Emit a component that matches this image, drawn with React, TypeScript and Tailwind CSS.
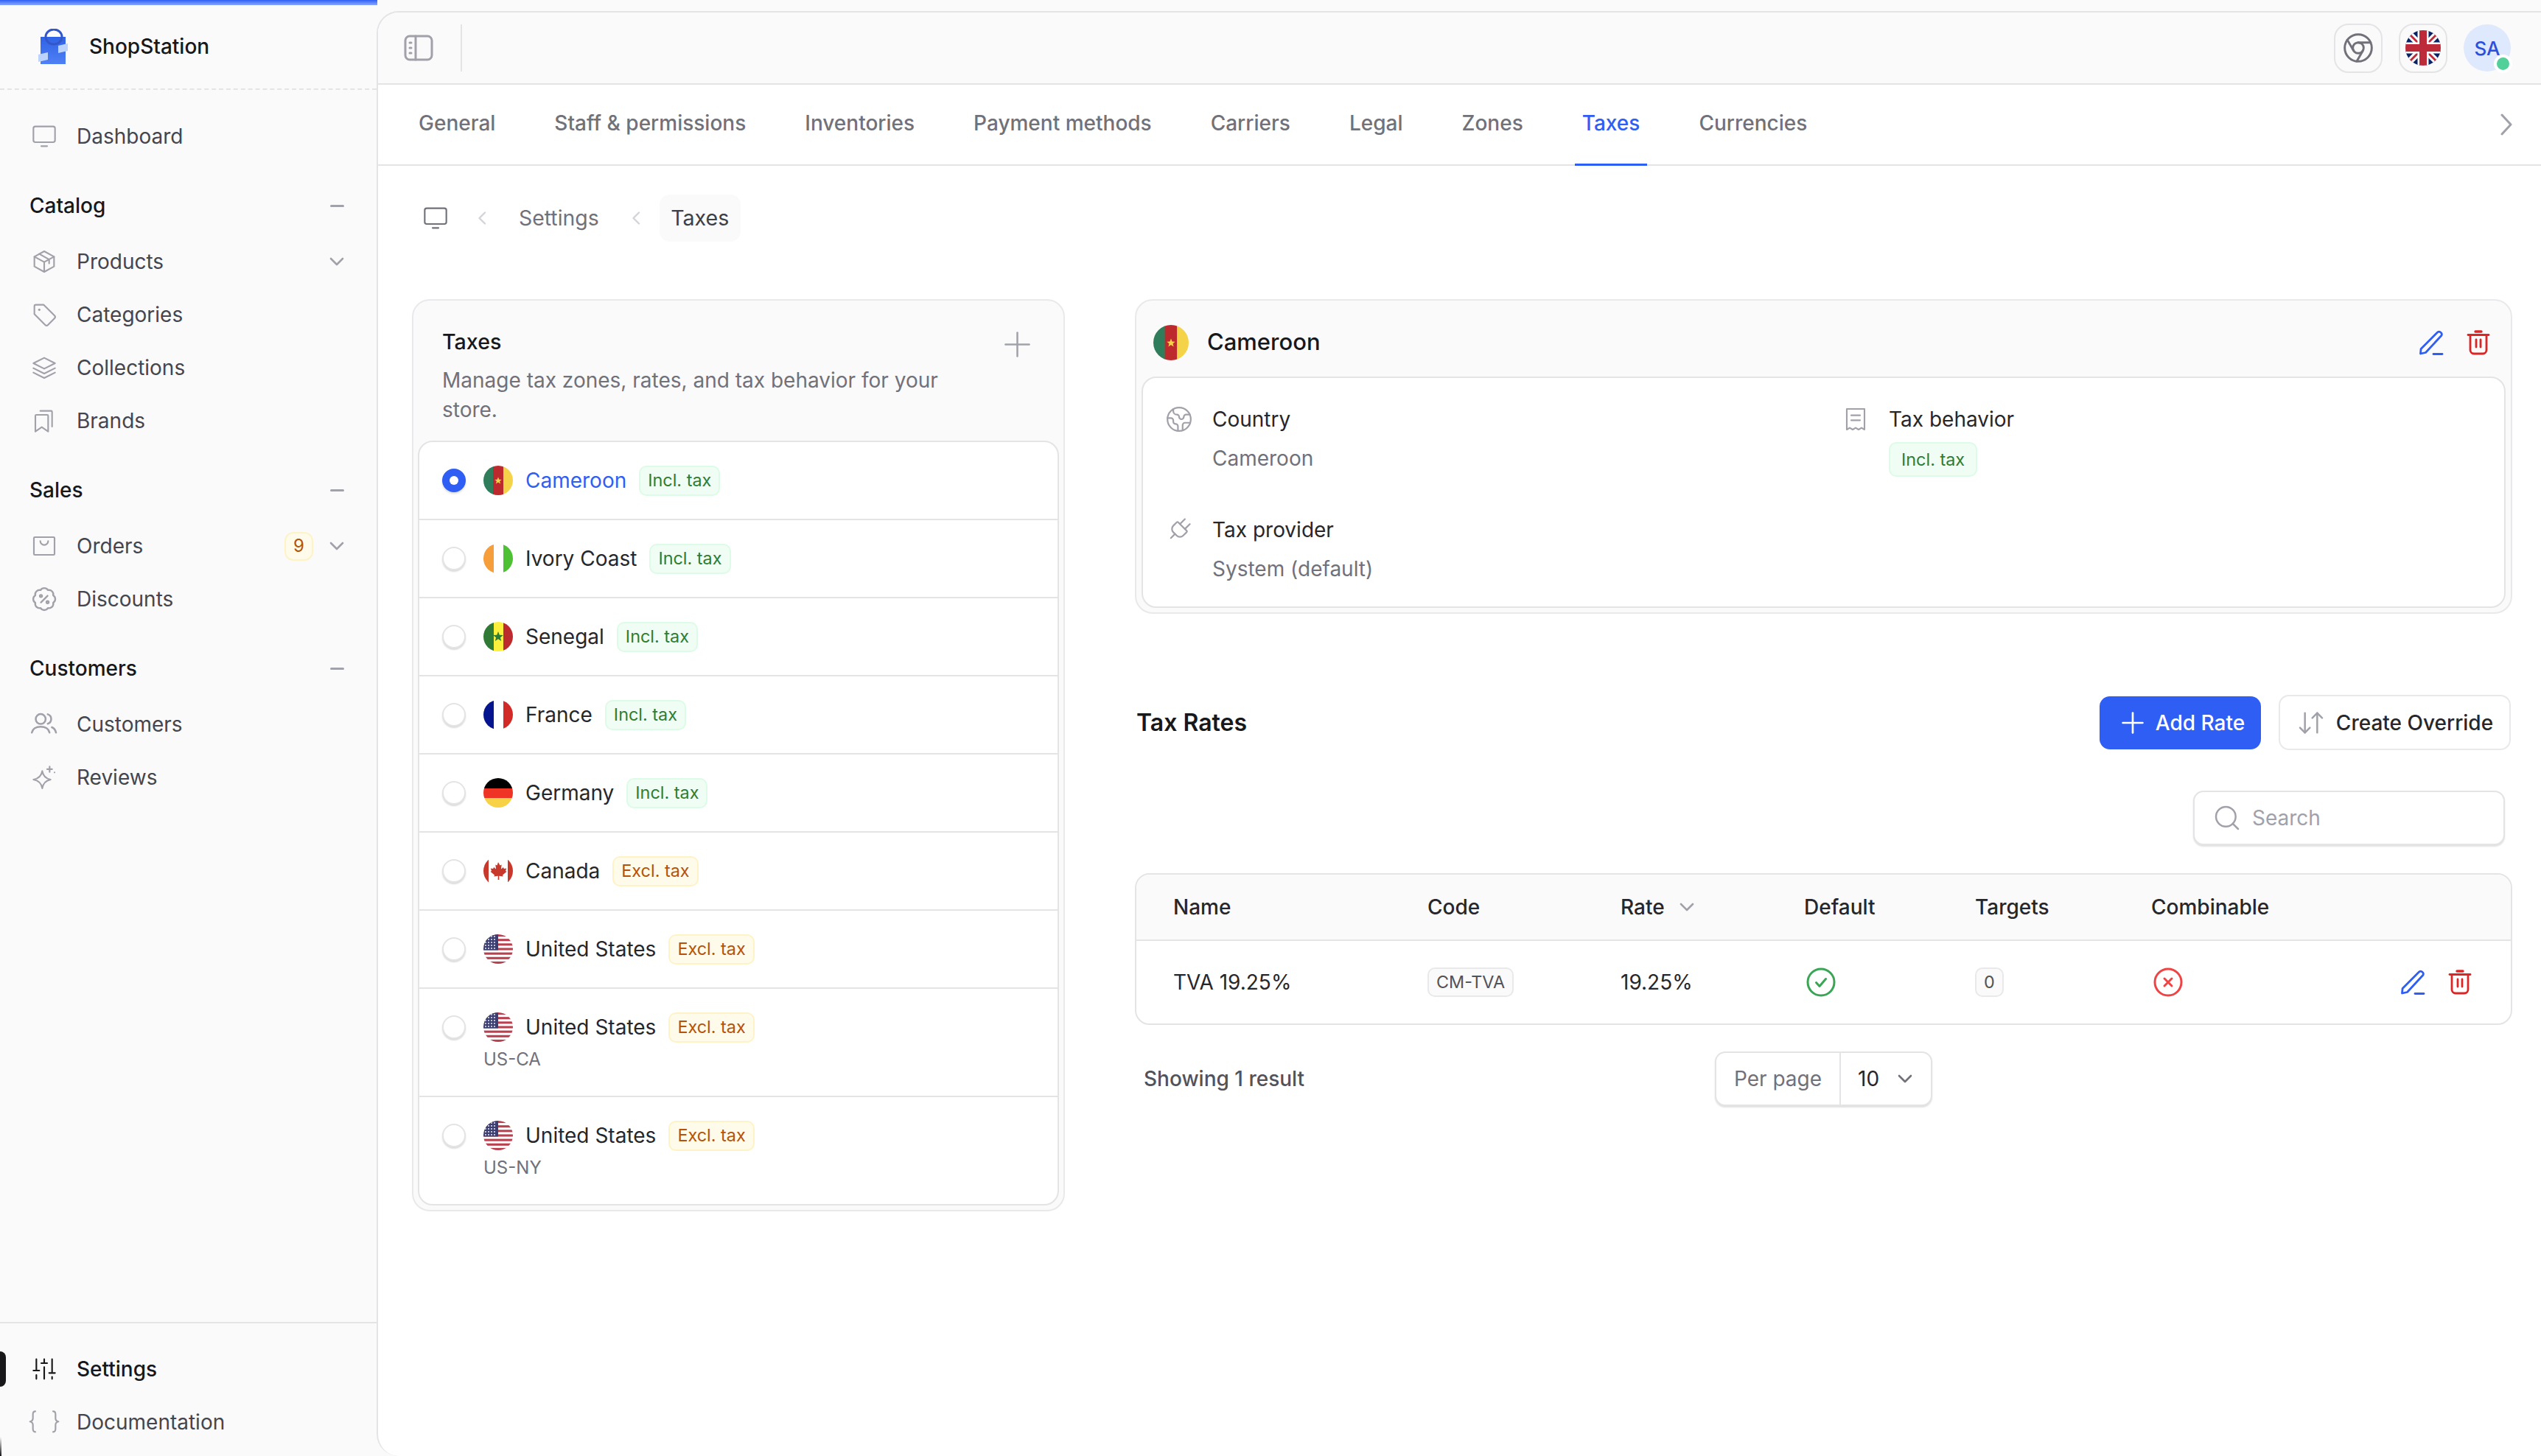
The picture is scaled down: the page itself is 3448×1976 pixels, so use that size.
import { ArrowDownUp, Earth, Plug, Plus, Search } from 'lucide-react';
import type { ReactNode } from 'react';

function Ico({ children, className = 'text-[#a1a1aa]' }: { children: ReactNode; className?: string }) {
	return (
		<svg
			viewBox="0 0 24 24"
			fill="none"
			stroke="currentColor"
			strokeWidth="1.6"
			strokeLinecap="round"
			strokeLinejoin="round"
			className={`h-8 w-8 shrink-0 overflow-visible ${className}`}
		>
			{children}
		</svg>
	);
}

const MonitorPaths = (
	<>
		<rect x="1" y="2" width="22" height="16" rx="2" />
		<path d="M9 22h6" />
	</>
);

function ChevronDownSmall({ className = 'text-[#a1a1aa]' }: { className?: string }) {
	return (
		<svg viewBox="0 0 20 12" fill="none" stroke="currentColor" strokeWidth="2.6" strokeLinecap="round" strokeLinejoin="round" className={`h-[12px] w-[20px] shrink-0 ${className}`}>
			<path d="M2 2l8 8 8-8" />
		</svg>
	);
}

function ChevronLeftSmall() {
	return (
		<svg viewBox="0 0 12 18" fill="none" stroke="#d4d4d8" strokeWidth="2.4" strokeLinecap="round" strokeLinejoin="round" className="h-[18px] w-[12px] shrink-0">
			<path d="M10 1.5 2.5 9l7.5 7.5" />
		</svg>
	);
}

function EditIcon() {
	return (
		<svg viewBox="0 0 34 34" fill="none" stroke="#2f5ef5" strokeWidth="2.8" strokeLinecap="round" strokeLinejoin="round" className="h-[34px] w-[34px] shrink-0">
			<path d="M25 3.5a3.6 3.6 0 0 1 6 3.8L9.5 30.5 2.5 32l.6-6.6z" />
			<path d="M20 32.5h12" />
		</svg>
	);
}

function TrashIcon() {
	return (
		<svg viewBox="0 0 32 34" fill="none" stroke="#dc2626" strokeWidth="2.8" strokeLinecap="round" strokeLinejoin="round" className="h-[34px] w-[32px] shrink-0">
			<path d="M12 2h8" strokeWidth="3.4" />
			<path d="M2 6.5h28" />
			<path d="M5 7v20a5 5 0 0 0 5 5h12a5 5 0 0 0 5-5V7" />
			<path d="M13 13v10M19 13v10" />
		</svg>
	);
}

function Logo() {
	return (
		<svg viewBox="0 0 40 48" className="h-12 w-10 shrink-0">
			<defs>
				<linearGradient id="bag" x1="0" y1="0" x2="0" y2="1">
					<stop offset="0" stopColor="#2f62e6" />
					<stop offset="1" stopColor="#4f80f5" />
				</linearGradient>
			</defs>
			<rect x="3" y="11" width="34" height="37" fill="url(#bag)" />
			<ellipse cx="21" cy="11" rx="11" ry="10" fill="none" stroke="#3556c8" strokeWidth="3" />
			<path d="M0 35l13-3v10l-13 3z" fill="#bcd4fb" />
			<path d="M27 23l13-3v10l-13 3z" fill="#bcd4fb" />
		</svg>
	);
}

function FlagBox({ size, children }: { size: 'sm' | 'lg'; children: ReactNode }) {
	return (
		<svg viewBox="0 0 40 40" className={`shrink-0 rounded-full ${size === 'sm' ? 'h-10 w-10' : 'h-12 w-12'}`}>
			{children}
		</svg>
	);
}

function Flag({ code, size = 'sm' }: { code: string; size?: 'sm' | 'lg' }) {
	if (code === 'cm')
		return (
			<FlagBox size={size}>
				<rect width="13.3" height="40" fill="#2f7d5b" />
				<rect x="13" width="14" height="40" fill="#bd2a2e" />
				<rect x="27" width="13" height="40" fill="#f5d348" />
				<path d="M20 15.5l1.3 3.2 3.4.2-2.6 2.2.9 3.4-3-1.9-3 1.9.9-3.4-2.6-2.2 3.4-.2z" fill="#f5d348" />
			</FlagBox>
		);
	if (code === 'ci')
		return (
			<FlagBox size={size}>
				<rect width="14" height="40" fill="#f59e3a" />
				<rect x="14" width="13" height="40" fill="#fff" />
				<rect x="27" width="13" height="40" fill="#4ec033" />
			</FlagBox>
		);
	if (code === 'sn')
		return (
			<FlagBox size={size}>
				<rect width="14" height="40" fill="#2f7a35" />
				<rect x="14" width="13" height="40" fill="#fdf03d" />
				<rect x="27" width="13" height="40" fill="#bd2a2e" />
				<path d="M20 13l1.8 4.7 5 .3-3.9 3.2 1.3 4.8-4.2-2.7-4.2 2.7 1.3-4.8-3.9-3.2 5-.3z" fill="#2f7a35" />
			</FlagBox>
		);
	if (code === 'fr')
		return (
			<FlagBox size={size}>
				<rect width="14" height="40" fill="#05148f" />
				<rect x="14" width="13" height="40" fill="#fff" />
				<rect x="27" width="13" height="40" fill="#d22a26" />
			</FlagBox>
		);
	if (code === 'de')
		return (
			<FlagBox size={size}>
				<rect width="40" height="14" fill="#000" />
				<rect y="14" width="40" height="13" fill="#ef3324" />
				<rect y="27" width="40" height="13" fill="#f7d146" />
			</FlagBox>
		);
	if (code === 'ca')
		return (
			<FlagBox size={size}>
				<rect width="40" height="40" fill="#fff" />
				<rect width="7" height="32" y="4" fill="#c8382b" />
				<rect x="33" width="7" height="32" y="4" fill="#c8382b" />
				<path d="M20 8l2.5 4.5 2.2-1-.8 6 3-2.6 1 2 3.3-.5-1.2 3.6 1.5.9-5.5 4.6.6 2-5.4-.7.2 5.2h-1.8l.2-5.2-5.4.7.6-2-5.5-4.6 1.5-.9-1.2-3.6 3.3.5 1-2 3 2.6-.8-6 2.2 1z" fill="#c8382b" />
			</FlagBox>
		);
	return (
		<FlagBox size={size}>
			<rect width="40" height="40" fill="#fff" />
			{[0, 1, 2, 3, 4, 5, 6].map((i) => (
				<rect key={i} y={i * 6.15} width="40" height="3.08" fill="#b9404f" />
			))}
			<rect width="20" height="21.5" fill="#3b3f72" />
			{[3, 7, 11, 15, 19].map((y) =>
				[3, 7, 11, 15].map((x) => <circle key={`${x}-${y}`} cx={x} cy={y} r="0.9" fill="#fff" />),
			)}
		</FlagBox>
	);
}

function UkFlag() {
	return (
		<svg viewBox="0 0 48 48" className="h-12 w-12 rounded-full">
			<rect width="48" height="48" fill="#0a2366" />
			<path d="M0 0l48 48M48 0L0 48" stroke="#fff" strokeWidth="9" />
			<path d="M0 0l48 48M48 0L0 48" stroke="#bd2a3a" strokeWidth="3" />
			<path d="M24 0v48M0 24h48" stroke="#fff" strokeWidth="15" />
			<path d="M24 0v48M0 24h48" stroke="#bd2a3a" strokeWidth="10" />
		</svg>
	);
}

function NavItem({ icon, label, active, badge, chevron }: { icon: ReactNode; label: string; active?: boolean; badge?: string; chevron?: boolean }) {
	return (
		<div className="relative flex h-[72px] items-center gap-[28px] pr-[44px] pl-[44px]">
			{active && <span className="absolute top-[12px] left-0 h-[48px] w-[8px] rounded-r-full bg-[#18181b]" />}
			<Ico className={active ? 'text-[#18181b]' : 'text-[#a1a1aa]'}>{icon}</Ico>
			<span className={`flex-1 text-[28px] ${active ? 'font-medium text-[#18181b]' : 'text-[#45454e]'}`}>{label}</span>
			{badge && (
				<span className="-mr-[6px] flex h-[39px] w-[39px] items-center justify-center rounded-[12px] border-2 border-[#fef3c7] bg-[#fffbeb] text-[24px] text-[#b45309]">
					{badge}
				</span>
			)}
			{chevron && <ChevronDownSmall />}
		</div>
	);
}

function SectionTitle({ label }: { label: string }) {
	return (
		<div className="mt-[36px] mb-[18px] flex h-[44px] items-center justify-between pr-[44px] pl-[40px]">
			<span className="text-[28px] font-medium text-[#18181b]">{label}</span>
			<span className="h-[3px] w-[19px] rounded-full bg-[#a1a1aa]" />
		</div>
	);
}

function Sidebar() {
	return (
		<aside className="relative flex h-full w-[511px] shrink-0 flex-col bg-[#fafafb]">
			<div className="absolute top-0 left-0 h-[7px] w-[512px] bg-gradient-to-b from-[#2f5ef5] to-[#8aa6fa]" />
			<div className="absolute bottom-0 left-0 h-[26px] w-[2px] bg-gradient-to-b from-transparent to-[#18181b]" />
			<div className="flex h-[122px] shrink-0 items-center gap-[29px] border-b-2 border-dashed border-[#e4e4e7] pt-[6px] pl-[52px]">
				<Logo />
				<span className="text-[28px] font-medium text-[#18181b]">ShopStation</span>
			</div>
			<div className="flex-1 pt-[27px]">
				<NavItem label="Dashboard" icon={MonitorPaths} />
				<SectionTitle label="Catalog" />
				<NavItem
					label="Products"
					chevron
					icon={
						<>
							<path d="M12 1.5 22 7v10l-10 5.5L2 17V7z" />
							<path d="M2 7l10 5.5L22 7M12 12.5v10M7 4.2l10 5.6v4" />
						</>
					}
				/>
				<NavItem
					label="Categories"
					icon={
						<>
							<path d="M2 3.5A1.5 1.5 0 0 1 3.5 2h8L22.5 13a2 2 0 0 1 0 2.8l-6.7 6.7a2 2 0 0 1-2.8 0L2 11.5z" />
							<path d="M7 7h.01" strokeWidth="2.4" />
						</>
					}
				/>
				<NavItem
					label="Collections"
					icon={
						<>
							<path d="M12 2 23 7.5 12 13 1 7.5z" />
							<path d="M1 12.5 12 18l11-5.5M1 17l11 5.5L23 17" />
						</>
					}
				/>
				<NavItem
					label="Brands"
					icon={
						<>
							<path d="M3 7a1 1 0 0 1 1-1h11a1 1 0 0 1 1 1v16l-6.5-4.5L3 23z" />
							<path d="M8 2h11a1 1 0 0 1 1 1v15" />
						</>
					}
				/>
				<SectionTitle label="Sales" />
				<NavItem
					label="Orders"
					badge="9"
					chevron
					icon={
						<>
							<rect x="1.5" y="3" width="21" height="18" rx="1" />
							<path d="M8 7a4 4 0 0 0 8 0" />
						</>
					}
				/>
				<NavItem
					label="Discounts"
					icon={
						<g transform="translate(-1.4 -1.4) scale(1.12)">
							<path d="M3.85 8.62a4 4 0 0 1 4.78-4.77 4 4 0 0 1 6.74 0 4 4 0 0 1 4.78 4.78 4 4 0 0 1 0 6.74 4 4 0 0 1-4.77 4.78 4 4 0 0 1-6.75 0 4 4 0 0 1-4.78-4.77 4 4 0 0 1 0-6.76Z" />
							<path d="m15 9-6 6" />
							<circle cx="9" cy="9.2" r="1" />
							<circle cx="15" cy="14.8" r="1" />
						</g>
					}
				/>
				<SectionTitle label="Customers" />
				<NavItem
					label="Customers"
					icon={
						<g transform="translate(-2.4 -2.4) scale(1.2)">
							<circle cx="9" cy="7.5" r="4.2" />
							<path d="M1.5 19c.6-3 3.5-5 7.5-5s6.9 2 7.5 5" />
							<path d="M15 3.5a4.2 4.2 0 0 1 0 8" />
							<path d="M18.5 14.5c1.7.7 3 2.300 3.500 4.500" />
						</g>
					}
				/>
				<NavItem
					label="Reviews"
					icon={
						<>
							<path d="M10 5.5c.8 5 3.4 7.7 8.5 8.7-5 1-7.7 3.700-8.500 9-.8-5.300-3.400-8-9-9 5.600-1 8.200-3.700 9-8.700z" />
							<path d="M17.5 1v5.500M15 3.700h5M22.500 7v.01" />
						</>
					}
				/>
			</div>
			<div className="shrink-0 border-t-2 border-[#e4e4e7] pt-[26px] pb-[10px]">
				<NavItem
					label="Settings"
					active
					icon={
						<>
							<path d="M4 2v11M4 18v4M12 2v3M12 10v12M20 2v13M20 20v2" />
							<path d="M1 13.5h6M9 6h6M17 16h6" />
						</>
					}
				/>
				<NavItem
					label="Documentation"
					icon={
						<>
							<path d="M3 1C1 1 .5 2.5.5 4v4c0 1.500-.8 3-3 3.500C-.3 12 .5 13.500.5 15v4c0 1.500.5 3 2.500 3" />
							<path d="M21 1c2 0 2.500 1.500 2.500 3v4c0 1.500.8 3 3 3.500-2.200.5-3 2-3 3.500v4c0 1.500-.5 3-2.500 3" />
						</>
					}
				/>
			</div>
		</aside>
	);
}

function Header() {
	return (
		<header className="flex h-[98px] shrink-0 items-center justify-between border-b-2 border-[#e4e4e7] bg-[#fafafb] pr-[41px] pl-[35px]">
			<div className="flex h-full items-center">
				<svg viewBox="0 0 40 36" fill="none" stroke="#a1a1aa" strokeWidth="3" strokeLinecap="round" className="h-[36px] w-[40px]">
					<rect x="2" y="2" width="36" height="32" rx="6" />
					<path d="M16 2v32M8 11h2M8 18h2M8 25h2" />
				</svg>
				<span className="ml-[37px] h-[64px] w-[2px] bg-[#e4e4e7]" />
			</div>
			<div className="flex items-center gap-[22px]">
				<div className="flex h-[67px] w-[66px] items-center justify-center rounded-[20px] border-2 border-[#e4e4e7]">
					<svg viewBox="0 0 24 24" fill="none" stroke="#71717a" strokeWidth="1.6" strokeLinecap="round" className="h-[44px] w-[44px]">
						<circle cx="12" cy="12" r="10" />
						<circle cx="12" cy="12" r="4" />
						<path d="M10.88 21.94 15.46 14M21.17 8H12M3.95 6.06 8.54 14" />
					</svg>
				</div>
				<div className="flex h-[67px] w-[66px] items-center justify-center rounded-[20px] border-2 border-[#e4e4e7]">
					<UkFlag />
				</div>
				<div className="relative flex h-[64px] w-[64px] items-center justify-center rounded-full bg-[#dfe9fd] text-[26px] font-medium text-[#2f4fd8]">
					SA
					<span className="absolute -right-[2px] -bottom-[2px] h-[25px] w-[25px] rounded-full border-[4px] border-white bg-[#52d09a]" />
				</div>
			</div>
		</header>
	);
}

const tabs = ['General', 'Staff & permissions', 'Inventories', 'Payment methods', 'Carriers', 'Legal', 'Zones', 'Taxes', 'Currencies'];

function Tabs() {
	return (
		<nav className="flex h-[110px] shrink-0 items-stretch justify-between border-b-2 border-[#e4e4e7] pr-[39px] pl-[45px]">
			<div className="flex items-stretch gap-[60px]">
				{tabs.map((t) => (
					<div
						key={t}
						className={`-mb-[2px] flex items-center border-b-[3px] px-[10px] pb-[3px] text-[28px] font-medium ${t === 'Taxes' ? 'border-[#2f5ef5] text-[#2f5ef5]' : 'border-transparent text-[#71717a]'}`}
					>
						{t}
					</div>
				))}
			</div>
			<div className="flex items-center">
				<svg viewBox="0 0 16 30" fill="none" stroke="#a1a1aa" strokeWidth="3" strokeLinecap="round" strokeLinejoin="round" className="h-[30px] w-[16px]">
					<path d="M2 2l12 13L2 28" />
				</svg>
			</div>
		</nav>
	);
}

function TaxBadge({ kind, tall }: { kind: 'incl' | 'excl'; tall?: boolean }) {
	return (
		<span
			className={`flex items-center rounded-[10px] border-2 text-[23.4px] ${tall ? 'h-[47px] px-[15px]' : 'h-[41px] px-[10px]'} ${kind === 'incl' ? 'border-[#dcfce7] bg-[#f0fdf4] text-[#2e7d32]' : 'border-[#fef3c7] bg-[#fffbeb] text-[#b45309]'}`}
		>
			{kind === 'incl' ? 'Incl. tax' : 'Excl. tax'}
		</span>
	);
}

const zones = [
	{ name: 'Cameroon', flag: 'cm', kind: 'incl' as const, selected: true },
	{ name: 'Ivory Coast', flag: 'ci', kind: 'incl' as const },
	{ name: 'Senegal', flag: 'sn', kind: 'incl' as const },
	{ name: 'France', flag: 'fr', kind: 'incl' as const },
	{ name: 'Germany', flag: 'de', kind: 'incl' as const },
	{ name: 'Canada', flag: 'ca', kind: 'excl' as const },
	{ name: 'United States', flag: 'us', kind: 'excl' as const },
	{ name: 'United States', flag: 'us', kind: 'excl' as const, sub: 'US-CA' },
	{ name: 'United States', flag: 'us', kind: 'excl' as const, sub: 'US-NY' },
];

function Radio({ selected }: { selected?: boolean }) {
	if (selected)
		return (
			<span className="flex h-8 w-8 shrink-0 items-center justify-center rounded-full bg-[#2f5ef5] shadow-[0_2px_3px_rgba(0,0,0,0.15)]">
				<span className="h-[12px] w-[12px] rounded-full bg-white" />
			</span>
		);
	return <span className="h-8 w-8 shrink-0 rounded-full border-2 border-[#e4e4e7] bg-white shadow-[0_2px_2px_rgba(0,0,0,0.14)]" />;
}

function TaxesCard() {
	return (
		<section className="w-[886px] shrink-0 self-start rounded-[24px] border-2 border-[#e9e9ec] bg-[#fafafb] p-[6px]">
			<div className="flex items-start justify-between pt-[30px] pr-[29px] pb-[22px] pl-[33px]">
				<div className="w-[700px]">
					<h2 className="text-[28.6px] leading-[40px] font-medium text-[#18181b]">Taxes</h2>
					<p className="mt-[12px] text-[28px] leading-[40px] text-[#71717a]">Manage tax zones, rates, and tax behavior for your store.</p>
				</div>
				<Plus size={55} strokeWidth={1.1} className="-mt-[4px] text-[#a1a1aa]" />
			</div>
			<ul className="overflow-hidden rounded-[20px] border-2 border-[#e4e4e7] bg-white">
				{zones.map((z, i) => (
					<li key={i} className={`py-[31px] pl-[31px] ${i > 0 ? 'border-t-2 border-[#e4e4e7]' : ''}`}>
						<div className="flex h-[42px] items-center">
							<Radio selected={z.selected} />
							<span className="ml-[24px]">
								<Flag code={z.flag} />
							</span>
							<span className={`ml-[17px] text-[28px] ${z.selected ? 'text-[#2f5ef5]' : 'text-[#27272a]'}`}>{z.name}</span>
							<span className="ml-[17px]">
								<TaxBadge kind={z.kind} />
							</span>
						</div>
						{z.sub && <div className="mt-[5px] pl-[56px] text-[24px] leading-[36px] text-[#71717a]">{z.sub}</div>}
					</li>
				))}
			</ul>
		</section>
	);
}

function DetailItem({ icon, title, children }: { icon: ReactNode; title: string; children: ReactNode }) {
	return (
		<div className="flex items-start gap-[29px]">
			<div className="flex h-8 w-8 items-center justify-center">{icon}</div>
			<div>
				<div className="text-[28px] leading-[32px] text-[#27272a]">{title}</div>
				<div className="mt-[21px] text-[28px] leading-[32px] text-[#71717a]">{children}</div>
			</div>
		</div>
	);
}

function CameroonCard() {
	return (
		<section className="rounded-[24px] border-2 border-[#e9e9ec] bg-[#fafafb] px-[7px] pb-[6px]">
			<div className="flex h-[103px] items-center justify-between pt-[10px] pr-[21px] pl-[16px]">
				<div className="flex items-center gap-[25px]">
					<Flag code="cm" size="lg" />
					<span className="text-[31px] font-medium text-[#18181b]">Cameroon</span>
				</div>
				<div className="flex items-center gap-[31px]">
					<EditIcon />
					<TrashIcon />
				</div>
			</div>
			<div className="grid h-[314px] grid-cols-[918px_1fr] content-start gap-y-[56px] rounded-[20px] border-2 border-[#e4e4e7] bg-white pt-[40px] pl-[33px]">
				<DetailItem icon={<Earth size={38} strokeWidth={1.4} className="shrink-0 text-[#a1a1aa]" />} title="Country">
					Cameroon
				</DetailItem>
				<DetailItem
					icon={
						<Ico>
							<path d="M3 1.5h18v21l-3-1.8-3 1.8-3-1.8-3 1.8-3-1.8-3 1.8z" />
							<path d="M7.5 8h9M7.5 13h9" />
						</Ico>
					}
					title="Tax behavior"
				>
					<div className="-mt-[6px] flex">
						<TaxBadge kind="incl" tall />
					</div>
				</DetailItem>
				<DetailItem icon={<Plug size={38} strokeWidth={1.4} className="shrink-0 rotate-45 text-[#a1a1aa]" />} title="Tax provider">
					System (default)
				</DetailItem>
			</div>
		</section>
	);
}

function SmallCode({ children }: { children: ReactNode }) {
	return <span className="flex h-[40px] items-center rounded-[10px] border-2 border-[#e9e9ec] bg-[#fafafa] px-[10px] text-[23.4px] text-[#52525b]">{children}</span>;
}

function RatesTable() {
	const cols = 'grid grid-cols-[345px_262px_249px_232px_239px_1fr] items-center pl-[50px]';
	return (
		<div className="mt-[38px] overflow-hidden rounded-[20px] border-2 border-[#e4e4e7]">
			<div className={`${cols} h-[90px] border-b-2 border-[#e4e4e7] bg-[#fafafb] text-[28px] font-medium text-[#27272a]`}>
				<span>Name</span>
				<span>Code</span>
				<span className="flex items-center gap-[20px]">
					Rate <ChevronDownSmall className="text-[#a1a1aa]" />
				</span>
				<span>Default</span>
				<span>Targets</span>
				<span>Combinable</span>
			</div>
			<div className={`${cols} h-[112px] text-[28px] text-[#27272a]`}>
				<span>TVA 19.25%</span>
				<span className="flex">
					<SmallCode>CM-TVA</SmallCode>
				</span>
				<span>19.25%</span>
				<span className="pl-[3px]">
					<svg viewBox="0 0 40 40" fill="none" stroke="#3aa655" strokeWidth="3" strokeLinecap="round" strokeLinejoin="round" className="h-10 w-10">
						<circle cx="20" cy="20" r="18" />
						<path d="M13.5 20.5l4.5 5 8.5-10" />
					</svg>
				</span>
				<span className="flex">
					<SmallCode>0</SmallCode>
				</span>
				<span className="flex items-center justify-between pr-[53px] pl-[3px]">
					<svg viewBox="0 0 40 40" fill="none" stroke="#ef4444" strokeWidth="3" strokeLinecap="round" className="h-10 w-10">
						<circle cx="20" cy="20" r="18" />
						<path d="M15 15l10 10M25 15L15 25" />
					</svg>
					<span className="flex items-center gap-[31px]">
						<EditIcon />
						<TrashIcon />
					</span>
				</span>
			</div>
		</div>
	);
}

function RatesSection() {
	return (
		<section>
			<div className="mt-[110px] flex items-center justify-between pl-[2px]">
				<h2 className="text-[32px] font-semibold text-[#18181b]">Tax Rates</h2>
				<div className="flex items-center gap-[24px] pr-[2px]">
					<button className="flex h-[72px] w-[219px] items-center justify-center gap-[8px] rounded-[14px] bg-[#2f5ef5] text-[28px] font-medium text-white">
						<Plus size={46} strokeWidth={1.4} />
						Add Rate
					</button>
					<button className="flex h-[75px] w-[315px] items-center justify-center gap-[14px] rounded-[14px] border-2 border-[#e9e9ec] bg-white text-[28px] font-medium text-[#27272a]">
						<ArrowDownUp size={40} strokeWidth={1.5} className="text-[#a1a1aa]" />
						Create Override
					</button>
				</div>
			</div>
			<div className="mt-[55px] flex justify-end pr-[10px]">
				<div className="flex h-[74px] w-[423px] items-center gap-[14px] rounded-[14px] border-2 border-[#e4e4e7] bg-white pl-[24px] shadow-[0_2px_2px_rgba(0,0,0,0.12)]">
					<Search size={40} strokeWidth={1.5} className="text-[#a1a1aa]" />
					<span className="text-[28px] text-[#a1a1aa]">Search</span>
				</div>
			</div>
			<RatesTable />
			<div className="mt-[36px] flex h-[74px] items-center pl-[12px]">
				<span className="w-[775px] text-[28px] font-medium text-[#52525b]">Showing 1 result</span>
				<div className="flex h-full w-[295px] items-stretch rounded-[14px] border-2 border-[#e4e4e7] bg-white shadow-[0_2px_2px_rgba(0,0,0,0.12)]">
					<span className="flex w-[169px] items-center justify-center border-r-2 border-[#e4e4e7] text-[28px] text-[#71717a]">Per page</span>
					<span className="flex flex-1 items-center gap-[25px] pl-[23px] text-[28px] text-[#27272a]">
						10 <ChevronDownSmall className="text-[#71717a]" />
					</span>
				</div>
			</div>
		</section>
	);
}

function Breadcrumb() {
	return (
		<div className="flex h-[64px] items-center pl-[62px]">
			<Ico className="text-[#71717a]">{MonitorPaths}</Ico>
			<span className="ml-[41px]">
				<ChevronLeftSmall />
			</span>
			<span className="ml-[44px] text-[28.4px] text-[#71717a]">Settings</span>
			<span className="ml-[44px]">
				<ChevronLeftSmall />
			</span>
			<span className="ml-[26px] flex h-[64px] w-[110px] items-center justify-center rounded-[14px] bg-[#fafafa] text-[28.6px] text-[#3f3f46]">Taxes</span>
		</div>
	);
}

export default function App() {
	return (
		<div className="flex h-[1976px] w-[3448px] overflow-hidden bg-[#fafafb] font-['Inter',sans-serif]">
			<Sidebar />
			<div className="flex-1 pt-[15px]">
				<main className="flex h-full flex-col overflow-hidden rounded-tl-[30px] rounded-bl-[30px] border-t-2 border-l-2 border-[#e4e4e7] bg-white">
					<Header />
					<Tabs />
					<div className="pt-[39px]">
						<Breadcrumb />
						<div className="mt-[78px] flex gap-[95px] pr-[39px] pl-[46px]">
							<TaxesCard />
							<div className="min-w-0 flex-1">
								<CameroonCard />
								<RatesSection />
							</div>
						</div>
					</div>
				</main>
			</div>
		</div>
	);
}
